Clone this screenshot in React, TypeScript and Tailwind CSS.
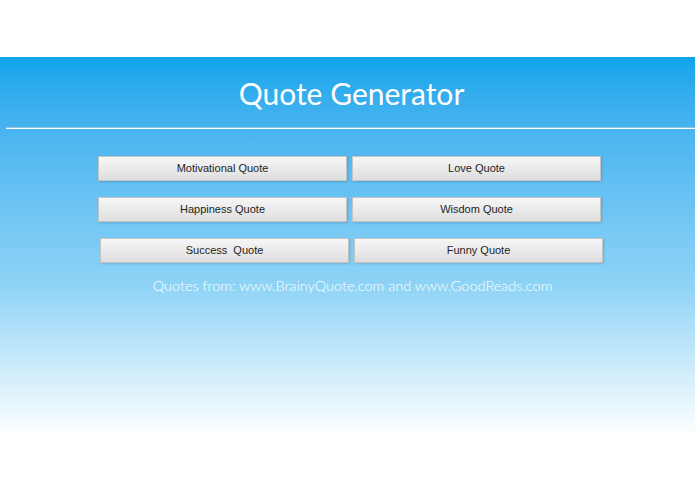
import React from "react";

// quote categories, laid out two per row
const ROWS: [string, string][] = [
  ["Motivational Quote", "Love Quote"],
  ["Happiness Quote", "Wisdom Quote"],
  ["Success\u00a0 Quote", "Funny Quote"],
];

function QuoteButton({ label }: { label: string }) {
  return (
    <button className="h-[25px] w-[249px] border border-[#c4c4c4] bg-linear-to-b from-[#f7f7f7] to-[#dedede] text-[11px] text-[#1e1e1e] shadow-[1px_1px_2px_rgba(0,0,0,0.15)] [font-family:'Liberation_Sans',Arial,sans-serif]">
      {label}
    </button>
  );
}

export default function App() {
  return (
    <div className="flex min-h-[494px] w-full flex-col bg-white">
      <div className="h-[57px] bg-white" />
      <div className="flex flex-1 flex-col bg-linear-to-b from-[#0aa5ec] via-[#8dd3f6] via-52% to-white to-[87%]">
        <h1 className="pl-[8px] pt-[17px] text-center text-[30px] font-normal leading-[38px] text-white [font-family:Lato,'Noto_Sans',sans-serif]">
          Quote Generator
        </h1>
        <hr className="ml-[6px] mt-[15px] border-t border-b border-t-[#8fc4de] border-b-white" />
        <div className="mt-[27px] flex flex-col gap-[16px]">
          {ROWS.map(([a, b], i) => (
            <div key={a} className={`flex justify-center gap-[5px] ${i === 2 ? "pl-[8px]" : "pl-[4px]"}`}>
              <QuoteButton label={a} />
              <QuoteButton label={b} />
            </div>
          ))}
        </div>
        <p className="mt-[12px] pl-[10px] text-center text-[14.5px] font-light text-white [font-family:Lato,'Noto_Sans',sans-serif]">
          Quotes from: www.BrainyQuote.com and www.GoodReads.com
        </p>
      </div>
    </div>
  );
}
